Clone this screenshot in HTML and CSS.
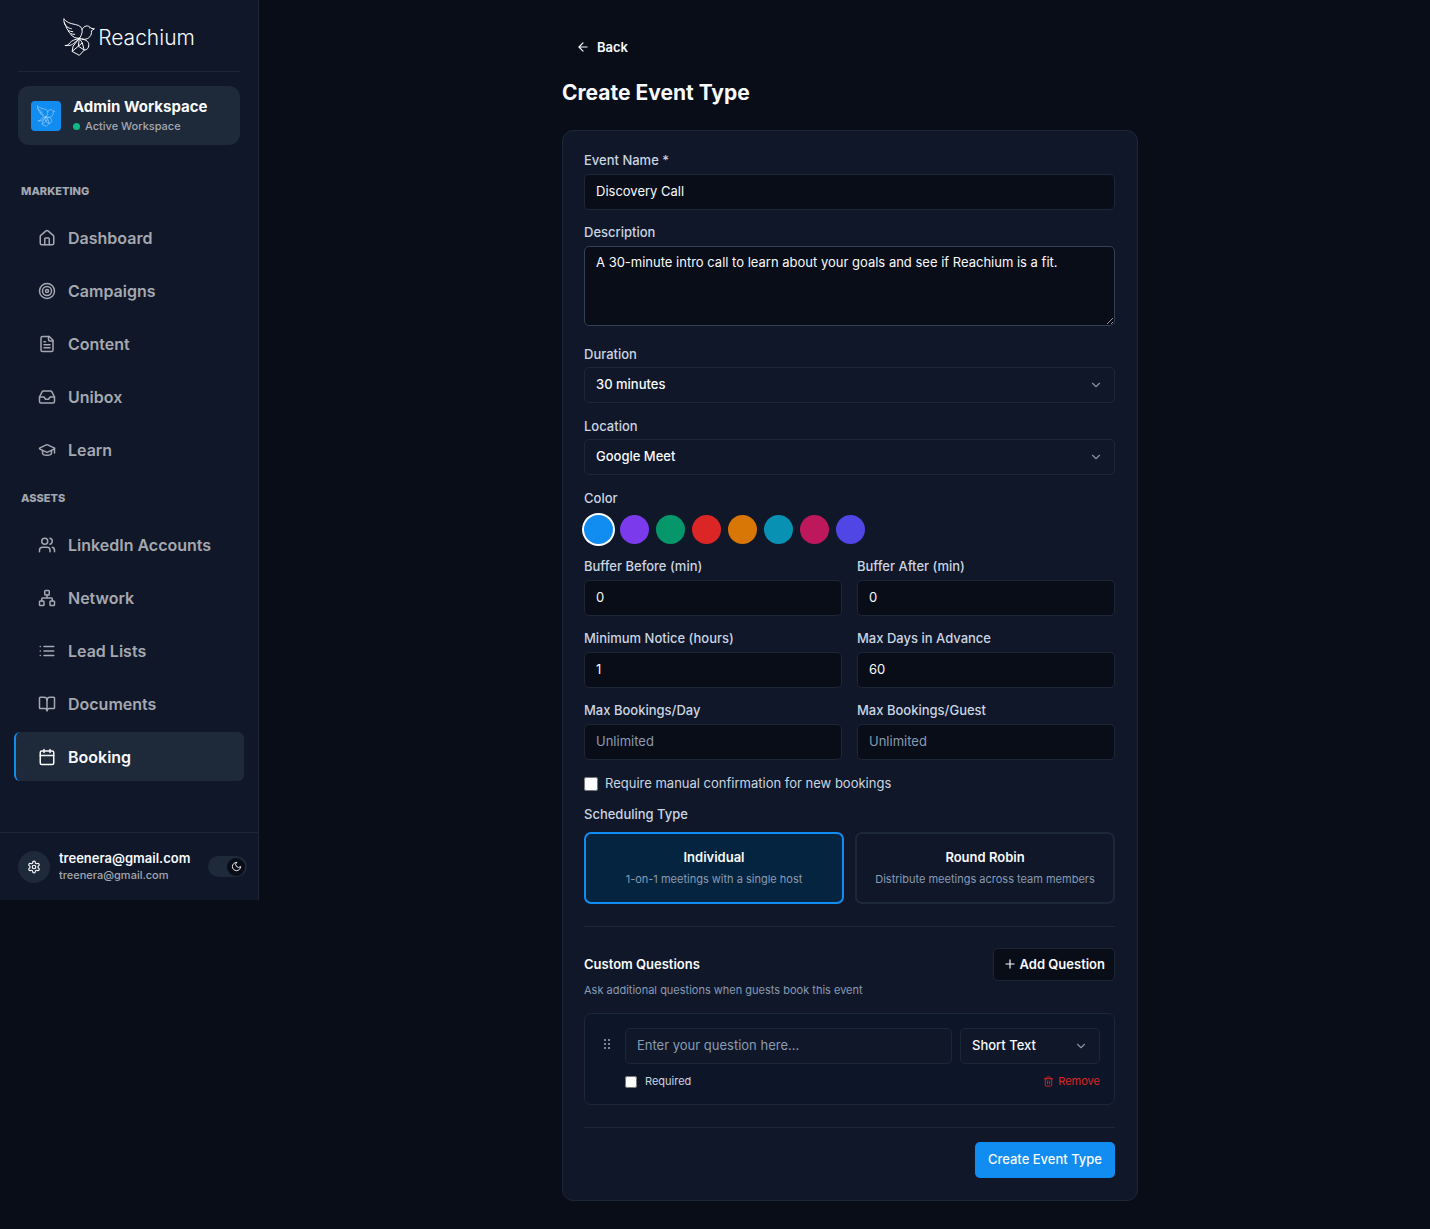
FILE: index.html
```
<!DOCTYPE html>
<html lang="en">
<head>
  <meta charset="UTF-8">
  <meta name="viewport" content="width=device-width, initial-scale=1">
  <title>Create Event Type - Reachium</title>
  <link rel="stylesheet" href="styles.css">
</head>
<body>

  <svg class="sprite" aria-hidden="true">
    <symbol id="bird" viewBox="0 0 96 116">
      <path d="M49 62C57 52 61 38 54 28C47 19 28 20 16 14C9 10 4 6 2 2C1 12 4 20 9 26"/>
      <path d="M3 13C7 26 14 31 26 33M8 26C11 37 18 41 30 42M14 38C18 47 25 50 36 50M22 49C28 58 38 62 49 62"/>
      <path d="M57 36C62 23 77 20 84 31L95 33L86 39C88 53 78 65 64 65C58 65 54 62 49 62"/>
      <path d="M79 30L81 31M49 62C36 66 26 68 20 76C16 82 12 84 5 84L16 84C28 84 36 74 49 62"/>
      <path d="M49 62L30 86L27 102L49 114L64 98L58 76L49 62L46 86L27 102M46 86L64 98M46 86L58 76"/>
      <path d="M56 65C70 66 78 72 78 82C78 92 72 98 64 98"/>
    </symbol>
    <symbol id="chevron" viewBox="0 0 24 24"><path d="m6 9 6 6 6-6"/></symbol>
  </svg>

  <div class="layout">
    <aside class="sidebar">
      <div class="brand">
        <svg class="brand-bird"><use href="#bird"/></svg>
        <span>Reachium</span>
      </div>

      <div class="workspace">
        <div class="workspace-icon"><svg><use href="#bird"/></svg></div>
        <div>
          <div class="workspace-name">Admin Workspace</div>
          <div class="workspace-status">Active Workspace</div>
        </div>
      </div>

      <nav class="nav">
        <h2>MARKETING</h2>
        <ul>
          <li><a href="#">
            <svg class="icon" viewBox="0 0 24 24"><path d="M15 21v-8a1 1 0 0 0-1-1h-4a1 1 0 0 0-1 1v8"/><path d="M3 10a2 2 0 0 1 .7-1.500l7-6a2 2 0 0 1 2.600 0l7 6A2 2 0 0 1 21 10v9a2 2 0 0 1-2 2H5a2 2 0 0 1-2-2z"/></svg>
            Dashboard</a></li>
          <li><a href="#">
            <svg class="icon" viewBox="0 0 24 24"><circle cx="12" cy="12" r="10"/><circle cx="12" cy="12" r="6"/><circle cx="12" cy="12" r="2"/></svg>
            Campaigns</a></li>
          <li><a href="#">
            <svg class="icon" viewBox="0 0 24 24"><path d="M15 2H6a2 2 0 0 0-2 2v16a2 2 0 0 0 2 2h12a2 2 0 0 0 2-2V7Z"/><path d="M14 2v4a2 2 0 0 0 2 2h4M10 9H8M16 13H8M16 17H8"/></svg>
            Content</a></li>
          <li><a href="#">
            <svg class="icon" viewBox="0 0 24 24"><path d="M22 12h-6l-2 3h-4l-2-3H2"/><path d="M5.450 5.110 2 12v6a2 2 0 0 0 2 2h16a2 2 0 0 0 2-2v-6l-3.450-6.890A2 2 0 0 0 16.760 4H7.240a2 2 0 0 0-1.790 1.110z"/></svg>
            Unibox</a></li>
          <li><a href="#">
            <svg class="icon" viewBox="0 0 24 24"><path d="M21.420 10.922a1 1 0 0 0-.019-1.838L12.830 5.180a2 2 0 0 0-1.660 0L2.600 9.080a1 1 0 0 0 0 1.832l8.570 3.908a2 2 0 0 0 1.660 0z"/><path d="M22 10v6M6 12.500V16a6 3 0 0 0 12 0v-3.500"/></svg>
            Learn</a></li>
        </ul>
        <h2>ASSETS</h2>
        <ul>
          <li><a href="#">
            <svg class="icon" viewBox="0 0 24 24"><path d="M16 21v-2a4 4 0 0 0-4-4H6a4 4 0 0 0-4 4v2"/><circle cx="9" cy="7" r="4"/><path d="M22 21v-2a4 4 0 0 0-3-3.870M16 3.130a4 4 0 0 1 0 7.750"/></svg>
            LinkedIn Accounts</a></li>
          <li><a href="#">
            <svg class="icon" viewBox="0 0 24 24"><rect x="16" y="16" width="6" height="6" rx="1"/><rect x="2" y="16" width="6" height="6" rx="1"/><rect x="9" y="2" width="6" height="6" rx="1"/><path d="M5 16v-3a1 1 0 0 1 1-1h12a1 1 0 0 1 1 1v3M12 12V8"/></svg>
            Network</a></li>
          <li><a href="#">
            <svg class="icon" viewBox="0 0 24 24"><path d="M3 12h.01M3 18h.01M3 6h.01M8 12h13M8 18h13M8 6h13"/></svg>
            Lead Lists</a></li>
          <li><a href="#">
            <svg class="icon" viewBox="0 0 24 24"><path d="M12 7v14"/><path d="M3 18a1 1 0 0 1-1-1V4a1 1 0 0 1 1-1h5a4 4 0 0 1 4 4 4 4 0 0 1 4-4h5a1 1 0 0 1 1 1v13a1 1 0 0 1-1 1h-6a3 3 0 0 0-3 3 3 3 0 0 0-3-3z"/></svg>
            Documents</a></li>
          <li><a href="#" class="active" aria-current="page">
            <svg class="icon" viewBox="0 0 24 24"><path d="M8 2v4M16 2v4"/><rect x="3" y="4" width="18" height="18" rx="2"/><path d="M3 10h18"/></svg>
            Booking</a></li>
        </ul>
      </nav>

      <div class="account">
        <button class="settings" type="button" aria-label="Settings">
          <svg class="icon" viewBox="0 0 24 24"><path d="M12.220 2h-.44a2 2 0 0 0-2 2v.18a2 2 0 0 1-1 1.730l-.43.25a2 2 0 0 1-2 0l-.15-.08a2 2 0 0 0-2.730.73l-.22.38a2 2 0 0 0 .73 2.730l.15.1a2 2 0 0 1 1 1.720v.51a2 2 0 0 1-1 1.740l-.15.09a2 2 0 0 0-.73 2.730l.22.38a2 2 0 0 0 2.730.73l.15-.08a2 2 0 0 1 2 0l.43.25a2 2 0 0 1 1 1.730V20a2 2 0 0 0 2 2h.44a2 2 0 0 0 2-2v-.18a2 2 0 0 1 1-1.730l.43-.25a2 2 0 0 1 2 0l.15.08a2 2 0 0 0 2.730-.73l.22-.39a2 2 0 0 0-.73-2.730l-.15-.08a2 2 0 0 1-1-1.740v-.5a2 2 0 0 1 1-1.740l.15-.09a2 2 0 0 0 .73-2.730l-.22-.38a2 2 0 0 0-2.730-.73l-.15.08a2 2 0 0 1-2 0l-.43-.25a2 2 0 0 1-1-1.730V4a2 2 0 0 0-2-2z"/><circle cx="12" cy="12" r="3"/></svg>
        </button>
        <div class="account-info">
          <div class="account-name">treenera@gmail.com</div>
          <div class="account-email">treenera@gmail.com</div>
        </div>
        <button class="theme-toggle" type="button" aria-label="Toggle dark mode">
          <span class="knob"><svg class="icon" viewBox="0 0 24 24"><path d="M12 3a6 6 0 0 0 9 9 9 9 0 1 1-9-9Z"/></svg></span>
        </button>
      </div>
    </aside>

    <main class="main">
      <div class="page">
        <a class="back" href="#">
          <svg class="icon" viewBox="0 0 24 24"><path d="m12 19-7-7 7-7M19 12H5"/></svg>
          Back
        </a>
        <h1>Create Event Type</h1>

        <form class="card">
          <div class="field">
            <label for="eventName">Event Name *</label>
            <input class="control" type="text" id="eventName" value="Discovery Call">
          </div>

          <div class="field description">
            <label for="description">Description</label>
            <textarea class="control" id="description">A 30-minute intro call to learn about your goals and see if Reachium is a fit.</textarea>
          </div>

          <div class="field dropdown">
            <label for="duration">Duration</label>
            <div class="select">
              <select class="control" id="duration">
                <option>15 minutes</option>
                <option selected>30 minutes</option>
                <option>60 minutes</option>
              </select>
              <svg class="icon"><use href="#chevron"/></svg>
            </div>
          </div>

          <div class="field dropdown">
            <label for="location">Location</label>
            <div class="select">
              <select class="control" id="location">
                <option selected>Google Meet</option>
                <option>Zoom</option>
              </select>
              <svg class="icon"><use href="#chevron"/></svg>
            </div>
          </div>

          <div class="field colors" role="radiogroup" aria-labelledby="colorLabel">
            <span class="label" id="colorLabel">Color</span>
            <div class="swatches">
              <input type="radio" name="color" class="blue" aria-label="Blue" checked>
              <input type="radio" name="color" class="violet" aria-label="Violet">
              <input type="radio" name="color" class="green" aria-label="Green">
              <input type="radio" name="color" class="red" aria-label="Red">
              <input type="radio" name="color" class="amber" aria-label="Amber">
              <input type="radio" name="color" class="cyan" aria-label="Cyan">
              <input type="radio" name="color" class="pink" aria-label="Pink">
              <input type="radio" name="color" class="indigo" aria-label="Indigo">
            </div>
          </div>

          <div class="grid">
            <div class="field">
              <label for="bufferBefore">Buffer Before (min)</label>
              <input class="control" type="number" id="bufferBefore" value="0">
            </div>
            <div class="field">
              <label for="bufferAfter">Buffer After (min)</label>
              <input class="control" type="number" id="bufferAfter" value="0">
            </div>
            <div class="field">
              <label for="minNotice">Minimum Notice (hours)</label>
              <input class="control" type="number" id="minNotice" value="1">
            </div>
            <div class="field">
              <label for="maxDays">Max Days in Advance</label>
              <input class="control" type="number" id="maxDays" value="60">
            </div>
            <div class="field">
              <label for="maxPerDay">Max Bookings/Day</label>
              <input class="control" type="number" id="maxPerDay" placeholder="Unlimited">
            </div>
            <div class="field">
              <label for="maxPerGuest">Max Bookings/Guest</label>
              <input class="control" type="number" id="maxPerGuest" placeholder="Unlimited">
            </div>
          </div>

          <div class="confirm">
            <input type="checkbox" id="confirm">
            <label for="confirm">Require manual confirmation for new bookings</label>
          </div>

          <div class="field scheduling">
            <span class="label">Scheduling Type</span>
            <div class="types">
              <button type="button" class="type selected" aria-pressed="true">
                <strong>Individual</strong>
                <small>1-on-1 meetings with a single host</small>
              </button>
              <button type="button" class="type" aria-pressed="false">
                <strong>Round Robin</strong>
                <small>Distribute meetings across team members</small>
              </button>
            </div>
          </div>

          <section class="questions">
            <div class="questions-header">
              <h3>Custom Questions</h3>
              <button type="button" class="add">
                <svg class="icon" viewBox="0 0 24 24"><path d="M5 12h14M12 5v14"/></svg>
                Add Question
              </button>
            </div>
            <p>Ask additional questions when guests book this event</p>

            <div class="question">
              <svg class="grip" viewBox="0 0 8 12"><circle cx="2" cy="2" r="1"/><circle cx="6" cy="2" r="1"/><circle cx="2" cy="6" r="1"/><circle cx="6" cy="6" r="1"/><circle cx="2" cy="10" r="1"/><circle cx="6" cy="10" r="1"/></svg>
              <div class="question-body">
                <div class="question-row">
                  <input class="control" type="text" placeholder="Enter your question here..." aria-label="Question">
                  <div class="select">
                    <select class="control" aria-label="Answer type">
                      <option>Short Text</option>
                      <option>Long Text</option>
                    </select>
                    <svg class="icon"><use href="#chevron"/></svg>
                  </div>
                </div>
                <div class="question-footer">
                  <input type="checkbox" id="required">
                  <label for="required">Required</label>
                  <button type="button" class="remove">
                    <svg class="icon" viewBox="0 0 24 24"><path d="M3 6h18M19 6v14a2 2 0 0 1-2 2H7a2 2 0 0 1-2-2V6M8 6V4a2 2 0 0 1 2-2h4a2 2 0 0 1 2 2v2M10 11v6M14 11v6"/></svg>
                    Remove
                  </button>
                </div>
              </div>
            </div>
          </section>

          <div class="actions">
            <button type="submit" class="submit">Create Event Type</button>
          </div>
        </form>
      </div>
    </main>
  </div>

</body>
</html>
```
FILE: styles.css
```
:root {
  --bg: #090d18;
  --card: #0f1729;
  --border: #1c2738;
  --surface: #1e293a;
  --text: #f8fafc;
  --label: #cbd5e1;
  --muted: #8a9bb3;
  --nav-text: #a5a8af;
  --accent: #118cf0;
}
* {
  box-sizing: border-box;
}
body {
  margin: 0;
  font-family: Inter, "Liberation Sans", sans-serif;
  font-size: 13px;
  background: var(--bg);
  color: var(--text);
}
button, input, select, textarea {
  font: inherit;
  color: inherit;
  margin: 0;
}
button {
  cursor: pointer;
}
h1, h2, h3, p, ul {
  margin: 0;
  padding: 0;
}
a {
  color: inherit;
  text-decoration: none;
}
.sprite {
  display: none;
}
.icon {
  width: 14px; height: 14px;
  flex: none;
  fill: none;
  stroke: currentColor;
  stroke-width: 2;
  stroke-linecap: round;
  stroke-linejoin: round;
}
.layout {
  display: flex;
  align-items: flex-start;
}

/* sidebar */
.sidebar {
  width: 259px;
  flex: none;
  background: var(--card);
  border-right: 1px solid var(--border);
}
.brand {
  display: flex; justify-content: center; align-items: center;
  gap: 3px;
  margin: 0 18px;
  padding: 18px 0 15px;
  border-bottom: 1px solid var(--border);
  font-size: 21px;
  font-weight: 300;
}
.brand-bird {
  width: 32px; height: 38px;
  fill: none;
  stroke: #fff;
  stroke-width: 3;
}
.workspace {
  display: flex; align-items: center;
  gap: 12px;
  margin: 14px 18px 0;
  padding: 10px 13px;
  border-radius: 11px;
  background: var(--surface);
}
.workspace-icon {
  display: flex; justify-content: center; align-items: center;
  width: 30px; height: 30px;
  border-radius: 4px;
  background: var(--accent);
}
.workspace-icon svg {
  width: 18px; height: 22px;
  fill: none;
  stroke: #b5dafb;
  stroke-width: 3;
}
.workspace-name {
  font-size: 15px;
  font-weight: 700;
  line-height: 22px;
}
.workspace-status {
  display: flex; align-items: center;
  gap: 5px;
  color: var(--nav-text);
  font-size: 11px;
  font-weight: 500;
  line-height: 17px;
}
.workspace-status::before {
  content: "";
  width: 7px; height: 7px;
  border-radius: 50%;
  background: #10b981;
}
.nav {
  padding: 38px 14px 51px;
}
.nav h2 {
  padding: 0 7px;
  margin-bottom: 14px;
  color: var(--nav-text);
  font-size: 11px;
  font-weight: 800;
  line-height: 16px;
}
.nav ul {
  display: flex; flex-direction: column;
  gap: 4px;
  list-style: none;
}
.nav ul + h2 {
  margin-top: 16px;
}
.nav a {
  display: flex; align-items: center;
  gap: 12px;
  height: 49px;
  padding-left: 22px;
  border-left: 2px solid transparent;
  border-radius: 6px;
  color: var(--nav-text);
  font-size: 16px;
  font-weight: 600;
}
.nav a.active {
  border-color: var(--accent);
  background: var(--surface);
  color: var(--text);
}
.nav .icon {
  width: 18px; height: 18px;
}
.account {
  display: flex; align-items: center;
  gap: 9px;
  padding: 16px 11px 16px 18px;
  border-top: 1px solid var(--border);
}
.settings {
  display: flex; justify-content: center; align-items: center;
  width: 32px; height: 32px;
  padding: 0;
  border: none;
  border-radius: 50%;
  background: var(--surface);
}
.account-info {
  flex: 1;
}
.account-name {
  font-size: 13px;
  font-weight: 600;
  line-height: 18px;
}
.account-email {
  color: var(--nav-text);
  font-size: 11px;
  font-weight: 500;
  line-height: 17px;
}
.theme-toggle {
  display: flex; justify-content: flex-end; align-items: center;
  width: 39px; height: 21px;
  padding: 0 2px;
  border: none;
  border-radius: 11px;
  background: var(--surface);
}
.knob {
  display: flex; justify-content: center; align-items: center;
  width: 18px; height: 18px;
  border-radius: 50%;
  background: var(--bg);
}
.knob .icon {
  width: 11px; height: 11px;
}

/* page */
.main {
  flex: 1;
  padding: 32px 0 28px 11px;
}
.page {
  max-width: 576px;
  margin: 0 auto;
}
.back {
  display: inline-flex; align-items: center;
  gap: 7px;
  height: 30px;
  padding: 0 14px;
  font-weight: 600;
}
h1 {
  margin: 16px 0 22px;
  font-size: 21px;
  font-weight: 700;
  line-height: 30px;
}
.card {
  display: flex; flex-direction: column;
  gap: 15px;
  padding: 22px 22px 22px 21px;
  border: 1px solid var(--border);
  border-radius: 11px;
  background: var(--card);
}
.field {
  display: flex; flex-direction: column;
  gap: 7px;
  min-width: 0;
}
.field > label, .label {
  color: var(--label);
  font-weight: 500;
  line-height: 14px;
}
.control {
  width: 100%; height: 36px;
  padding: 0 11px 2px;
  border: 1px solid var(--border);
  border-radius: 5px;
  outline: none;
  background: var(--bg);
}
.control:focus {
  border-color: var(--accent);
}
.control::placeholder {
  color: var(--muted);
}
input[type="number"] {
  appearance: textfield;
}
textarea.control {
  display: block;
  height: 80px;
  padding: 6px 11px;
  border-color: #334155;
  line-height: 18px;
  resize: vertical;
}
.description {
  padding-bottom: 6px;
}
.dropdown {
  gap: 6px;
  padding-bottom: 1px;
}
.select {
  position: relative;
}
.select .control {
  appearance: none;
  background: transparent;
  font-weight: 500;
}
.select option {
  background: var(--card);
}
.select .icon {
  position: absolute;
  top: 11px; right: 12px;
  color: #8b909b;
  pointer-events: none;
}
.colors {
  gap: 10px;
}
.swatches {
  display: flex; flex-wrap: wrap;
  gap: 7px;
}
.swatches input {
  appearance: none;
  width: 29px; height: 29px;
  border-radius: 50%;
  cursor: pointer;
}
.swatches input:checked {
  box-shadow: 0 0 0 2px #fff;
}
.blue { background: #118cf0; }
.violet { background: #7c3aed; }
.green { background: #059669; }
.red { background: #dc2626; }
.amber { background: #d97706; }
.cyan { background: #0891b2; }
.pink { background: #be185d; }
.indigo { background: #4f46e5; }
.grid {
  display: grid;
  grid-template-columns: 1fr 1fr;
  gap: 15px;
}
.confirm {
  display: flex; align-items: center;
  gap: 7px;
  color: var(--label);
  line-height: 17px;
}
.confirm input {
  width: 14px; height: 14px;
}
.scheduling {
  gap: 11px;
}
.types {
  display: grid;
  grid-template-columns: 1fr 1fr;
  gap: 11px;
}
.type {
  display: flex; flex-direction: column; justify-content: center; align-items: center;
  gap: 5px;
  height: 72px;
  padding: 0 14px 2px;
  border: 2px solid var(--border);
  border-radius: 7px;
  background: transparent;
}
.type strong {
  font-weight: 600;
  line-height: 18px;
}
.type small {
  color: var(--muted);
  font-size: 11px;
  line-height: 16px;
}
.type.selected {
  border-color: var(--accent);
  background: #042440;
}
.questions {
  margin-top: 7px;
  padding: 21px 0 7px;
  border-top: 1px solid var(--border);
}
.questions-header {
  display: flex; justify-content: space-between; align-items: center;
}
.questions h3 {
  padding-bottom: 2px;
  font-size: 13px;
  font-weight: 600;
}
.add {
  display: flex; align-items: center;
  gap: 3px;
  height: 33px;
  padding: 0 9px 2px;
  border: 1px solid var(--border);
  border-radius: 5px;
  background: var(--bg);
  font-weight: 600;
}
.questions p {
  color: var(--muted);
  font-size: 11px;
  line-height: 18px;
  margin-bottom: 14px;
}
.question {
  display: flex;
  gap: 14px;
  padding: 14px 14px 14px 18px;
  border: 1px solid var(--border);
  border-radius: 7px;
  background: #0d1628;
}
.grip {
  width: 8px; height: 12px;
  flex: none;
  margin-top: 10px;
  fill: #a5a8af;
}
.question-body {
  flex: 1;
  min-width: 0;
}
.question-row {
  display: flex;
  gap: 8px;
}
.question-row .control {
  background: var(--card);
}
.question-row .select {
  width: 140px;
  flex: none;
}
.question-footer {
  display: flex; align-items: center;
  gap: 8px;
  margin-top: 9px;
  color: var(--label);
  font-size: 11px;
  line-height: 17px;
}
.question-footer input {
  width: 12px; height: 12px;
}
.remove {
  display: flex; align-items: center;
  gap: 4px;
  margin-left: auto;
  padding: 0;
  border: none;
  background: none;
  color: #dc2626;
}
.remove .icon {
  width: 11px; height: 11px;
}
.actions {
  display: flex; justify-content: flex-end;
  padding-top: 14px;
  border-top: 1px solid var(--border);
}
.submit {
  height: 36px;
  padding: 0 13px 2px;
  border: none;
  border-radius: 5px;
  background: var(--accent);
  font-weight: 500;
}
@media (max-width: 800px) {
  .layout { flex-direction: column; }
  .sidebar { width: 100%; }
  .main { width: 100%; padding: 24px 12px; }
}
```
